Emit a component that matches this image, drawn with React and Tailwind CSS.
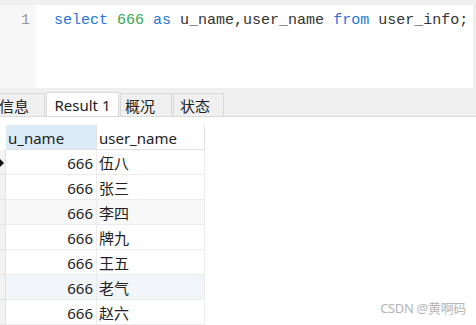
import React from "react";

const rows = [
  { name: "伍八", bg: "bg-white", current: true },
  { name: "张三", bg: "bg-white" },
  { name: "李四", bg: "bg-[#f8f8f8]" },
  { name: "牌九", bg: "bg-white" },
  { name: "王五", bg: "bg-white" },
  { name: "老气", bg: "bg-[#f2f6fb]" },
  { name: "赵六", bg: "bg-white" },
];

const uiFont = { fontFamily: '"Noto Sans", "Noto Sans CJK SC", sans-serif' };

const Tab = ({ children, active, className = "" }) => (
  <div
    className={
      "flex items-center border border-b-0 border-[#d9d9d9] pt-[2px] text-[15px] text-[#222] " +
      (active ? "h-[24px] bg-white" : "h-[23px] bg-[#f0f0f0]") +
      " " +
      className
    }
  >
    {children}
  </div>
);

export default function App() {
  return (
    <div className="relative h-[325px] w-[476px] overflow-hidden bg-[#f0f0f0]" style={uiFont}>
      {/* editor */}
      <div className="flex h-[88px] pt-[5px]">
        <div
          className="w-[36px] bg-[#f7f7f7] pt-[5px] pr-[6px] text-right text-[15px] leading-[22px] text-[#999]"
          style={{ fontFamily: '"Liberation Mono", monospace' }}
        >
          1
        </div>
        <div
          className="mr-[3px] flex-1 bg-white pl-[18px] pt-[5px] text-[15px] leading-[22px] text-[#333]"
          style={{ fontFamily: '"Liberation Mono", monospace' }}
        >
          <span className="text-[#2477d6]">select</span>{" "}
          <span className="text-[#33a852]">666</span>{" "}
          <span className="text-[#2477d6]">as</span> u_name,user_name{" "}
          <span className="text-[#2477d6]">from</span> user_info;
        </div>
      </div>

      {/* tabs */}
      <div className="flex h-[28px] items-end gap-[1px]">
        <Tab className="-ml-[2px] w-[47px]">信息</Tab>
        <Tab active className="w-[73px] justify-center">
          Result 1
        </Tab>
        <Tab className="w-[52px] pl-[4px]">概况</Tab>
        <Tab className="w-[51px] pl-[6px]">状态</Tab>
      </div>

      {/* grid */}
      <div className="h-[209px] border-t border-[#d9d9d9] bg-white pt-[8px]">
        <div className="flex h-[25px] text-[15px] text-[#222]">
          <div className="w-[6px] bg-white" />
          <div className="flex w-[91px] items-center border-b border-r border-[#e2e2e2] bg-[#dcebf8] pl-[2px] pt-[2px]">
            u_name
          </div>
          <div className="flex w-[108px] items-center border-b border-r border-[#e2e2e2] pl-[2px] pt-[2px]">
            user_name
          </div>
        </div>
        {rows.map((r) => (
          <div key={r.name} className="flex h-[25px] text-[15px] text-[#222]">
            <div className="relative w-[6px] border-b border-r border-[#e2e2e2] bg-[#f3f3f3]">
              {r.current && (
                <div className="absolute left-0 top-[9px] h-0 w-0 border-y-[4px] border-l-[4px] border-y-transparent border-l-[#111]" />
              )}
            </div>
            <div className={"flex w-[91px] items-center justify-end border-b border-r border-[#ececec] pr-[3px] pt-[2px] " + r.bg}>
              666
            </div>
            <div className={"flex w-[108px] items-center border-b border-r border-[#ececec] pl-[2px] pt-[2px] " + r.bg}>
              {r.name}
            </div>
          </div>
        ))}
      </div>

      {/* watermark */}
      <div className="absolute bottom-[7px] right-[10px] text-[13px] tracking-tight text-[#b5b5b5]">
        CSDN @黄啊码
      </div>
    </div>
  );
}
